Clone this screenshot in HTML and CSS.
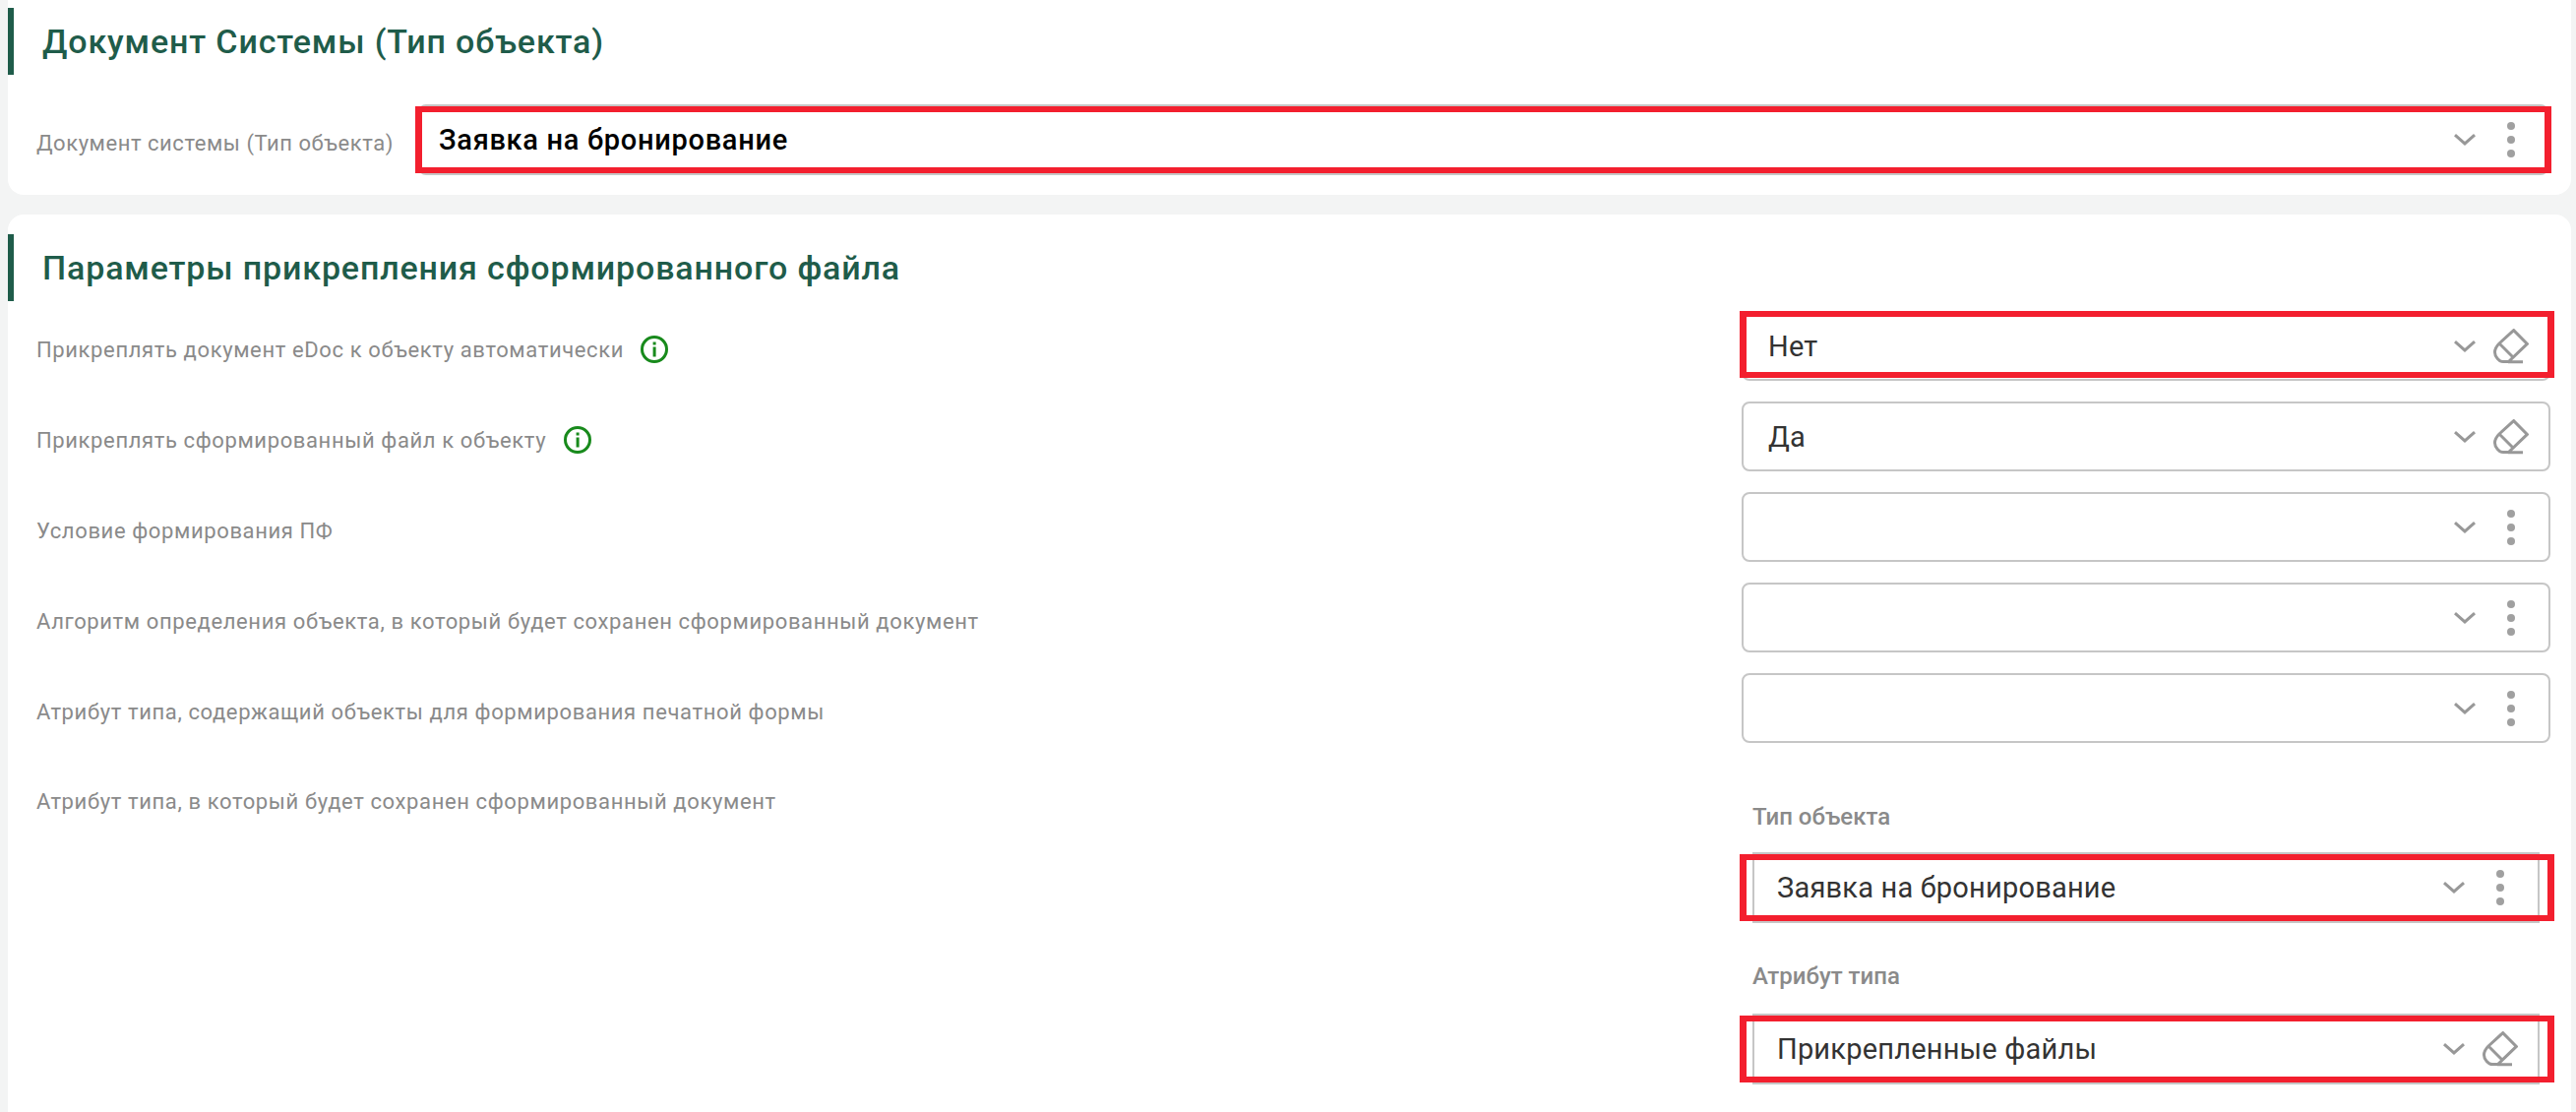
FILE: index.html
```html
<!DOCTYPE html>
<html lang="ru">
<head>
<meta charset="utf-8">
<title>Документ Системы</title>
<link rel="stylesheet" href="styles.css">
</head>
<body>
<svg class="defs" width="0" height="0" aria-hidden="true">
  <defs>
    <symbol id="chev" viewBox="0 0 22 12"><path d="M1 1.2 L11 10 L21 1.2" fill="none" stroke="currentColor" stroke-width="3"/></symbol>
    <symbol id="eraser" viewBox="0 0 36 36"><path d="M6 15 L20.7 1.6 L34.4 15.4 L15.5 33.6 H10 C6 33.6 1.5 28.5 1.5 24 C1.5 21 3 18 6 15 Z M6 15 L20 29 M15 33.8 H30" fill="none" stroke="currentColor" stroke-width="3"/></symbol>
    <symbol id="info" viewBox="0 0 28 28"><circle cx="14" cy="14" r="12.5" fill="none" stroke="currentColor" stroke-width="3"/><rect x="12.6" y="11.5" width="3" height="10" fill="currentColor"/><rect x="12.6" y="6.5" width="3" height="3" fill="currentColor"/></symbol>
  </defs>
</svg>

<section class="card card-doc">
  <h2 class="heading">Документ Системы (Тип объекта)</h2>
  <div class="doc-row">
    <span class="label label-doc">Документ системы (Тип объекта)</span>
    <div class="select select-strong mark mark-doc">
      <span class="value">Заявка на бронирование</span>
      <svg class="chev"><use href="#chev"/></svg>
      <span class="dots"><i></i><i></i><i></i></span>
    </div>
  </div>
</section>

<section class="card card-params">
  <h2 class="heading">Параметры прикрепления сформированного файла</h2>
  <div class="rows">
    <div class="row">
      <span class="label">Прикреплять документ eDoc к объекту автоматически<svg class="info"><use href="#info"/></svg></span>
      <div class="select mark mark-wide">
        <span class="value">Нет</span>
        <svg class="chev"><use href="#chev"/></svg>
        <svg class="eraser"><use href="#eraser"/></svg>
      </div>
    </div>
    <div class="row">
      <span class="label">Прикреплять сформированный файл к объекту<svg class="info info-near"><use href="#info"/></svg></span>
      <div class="select">
        <span class="value">Да</span>
        <svg class="chev"><use href="#chev"/></svg>
        <svg class="eraser"><use href="#eraser"/></svg>
      </div>
    </div>
    <div class="row">
      <span class="label">Условие формирования ПФ</span>
      <div class="select">
        <span class="value"></span>
        <svg class="chev"><use href="#chev"/></svg>
        <span class="dots"><i></i><i></i><i></i></span>
      </div>
    </div>
    <div class="row">
      <span class="label">Алгоритм определения объекта, в который будет сохранен сформированный документ</span>
      <div class="select">
        <span class="value"></span>
        <svg class="chev"><use href="#chev"/></svg>
        <span class="dots"><i></i><i></i><i></i></span>
      </div>
    </div>
    <div class="row">
      <span class="label">Атрибут типа, содержащий объекты для формирования печатной формы</span>
      <div class="select">
        <span class="value"></span>
        <svg class="chev"><use href="#chev"/></svg>
        <span class="dots"><i></i><i></i><i></i></span>
      </div>
    </div>
    <div class="row row-nested">
      <span class="label">Атрибут типа, в который будет сохранен сформированный документ</span>
      <div class="nested">
        <span class="sublabel">Тип объекта</span>
        <div class="select select-square mark mark-nested">
          <span class="value">Заявка на бронирование</span>
          <svg class="chev"><use href="#chev"/></svg>
          <span class="dots"><i></i><i></i><i></i></span>
        </div>
        <span class="sublabel sublabel-next">Атрибут типа</span>
        <div class="select select-square mark mark-nested">
          <span class="value">Прикрепленные файлы</span>
          <svg class="chev"><use href="#chev"/></svg>
          <svg class="eraser"><use href="#eraser"/></svg>
        </div>
      </div>
    </div>
  </div>
</section>
</body>
</html>
```

FILE: styles.css
```css
* { box-sizing: border-box; }
html, body { height: 100%; }
body {
  margin: 0;
  padding: 0 5px 0 8px;
  height: 1130px;
  overflow: hidden;
  background: #f3f4f4;
  font-family: Roboto, "Noto Sans", sans-serif;
  color: #333;
}
.defs { display: block; height: 0; }
.card { background: #fff; }
.card-doc {
  height: 198px;
  padding-top: 8px;
  border-radius: 0 0 16px 16px;
}
.card-params {
  height: 912px;
  margin-top: 20px;
  padding-top: 20px;
  border-radius: 16px 16px 0 0;
}
.heading {
  margin: 0;
  height: 68px;
  padding-left: 29px;
  border-left: 6px solid #1f5c4a;
  display: flex;
  align-items: center;
  font-size: 34px;
  font-weight: 500;
  letter-spacing: 0.85px;
  color: #1f5c4a;
}
.doc-row {
  display: flex;
  align-items: center;
  margin-top: 30px;
  padding: 0 23px 0 29px;
}
.label {
  display: flex;
  align-items: center;
  font-size: 22px;
  letter-spacing: 0.62px;
  color: #8a8a8a;
  padding-top: 7px;
}
.label-doc { width: 388px; flex: none; letter-spacing: 0.55px; padding-top: 6px; }
.select {
  position: relative;
  flex: none;
  display: flex;
  align-items: center;
  height: 72px;
  padding: 0 20px 0 25px;
  border: 2px solid #c6c6c6;
  border-radius: 8px;
  background: #fff;
}
.select-strong { flex: 1; padding: 0 18px 0 19px; }
.select-strong .value { font-weight: 500; color: #000; letter-spacing: 0.7px; }
.value { flex: 1; font-size: 29px; letter-spacing: 0.2px; color: #333; }
.chev { width: 22px; height: 12px; color: #989898; margin-right: 18px; }
.eraser { width: 36px; height: 36px; color: #989898; }
.dots {
  width: 36px;
  display: flex;
  flex-direction: column;
  align-items: center;
  gap: 6px;
}
.dots i { width: 8px; height: 8px; border-radius: 50%; background: #a0a0a0; }
.info { width: 28px; height: 28px; color: #188a1c; margin-left: 17px; }
.info-near { margin-left: 18px; }

.rows { margin-top: 10px; padding: 0 21px 0 29px; display: flex; flex-direction: column; gap: 21px; }
.row { display: flex; align-items: center; justify-content: space-between; }
.row > .select { width: 822px; height: 71px; }
.row-nested { align-items: flex-start; }
.row-nested > .label { padding-top: 26px; }
.nested {
  width: 800px;
  margin-right: 11px;
  margin-top: 39px;
  display: flex;
  flex-direction: column;
}
.sublabel { font-size: 24px; font-weight: 500; color: #8a8a8a; line-height: 30px; }
.sublabel-next { margin-top: 39px; }
.nested .sublabel + .select { margin-top: 21px; }
.nested .sublabel-next + .select { margin-top: 23px; }
.select-square { border-radius: 0; padding-left: 23px; }

/* red annotation frames drawn over the screenshot */
.mark::after {
  content: "";
  position: absolute;
  border: solid #f31f2e;
  border-width: 6px 7px;
  pointer-events: none;
}
.mark-doc::after { inset: 0 -5px 0 -5px; }
.mark-wide::after { inset: -2px -6px 1px -4px; }
.mark-nested::after { inset: 0 -17px 0 -15px; }
```
